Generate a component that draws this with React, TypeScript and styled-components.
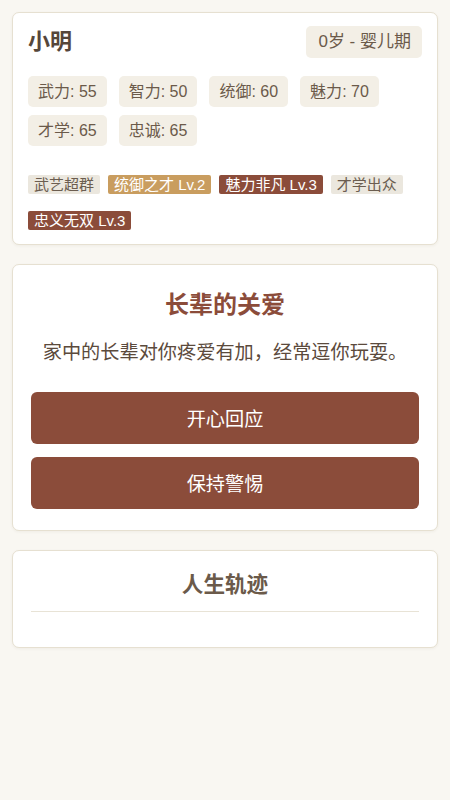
import React from "react";
import styled, { createGlobalStyle } from "styled-components";

const GlobalStyle = createGlobalStyle`
  html, body {
    margin: 0;
    padding: 0;
    background: #f9f7f2;
  }
  body {
    font-family: "Liberation Sans", "Noto Sans CJK SC", sans-serif;
    color: #5b4a3c;
  }
  * { box-sizing: border-box; }
`;

const Page = styled.div`
  padding: 12px 12px 40px;
  display: flex;
  flex-direction: column;
  gap: 19px;
`;

const Card = styled.section<{ $pad: string }>`
  background: #ffffff;
  border: 1px solid #e6e0d1;
  border-radius: 7px;
  box-shadow: 0 1px 3px rgba(90, 70, 40, 0.06);
  padding: ${(p) => p.$pad};
`;

const Header = styled.div`
  display: flex;
  align-items: center;
  justify-content: space-between;
  height: 32px;
  margin-bottom: 18px;
`;

const Name = styled.h2`
  margin: 0;
  font-size: 22px;
  font-weight: 700;
  color: #55463a;
  line-height: 1;
`;

const AgeBadge = styled.div`
  background: #f3efe6;
  color: #6b5a4a;
  font-size: 17px;
  line-height: 20px;
  padding: 6px 11px 6px 12px;
  border-radius: 5px;
`;

const Stats = styled.div`
  display: flex;
  flex-wrap: wrap;
  gap: 8px 12px;
`;

const Stat = styled.div`
  background: #f3efe6;
  color: #6b5a4a;
  font-size: 16px;
  line-height: 21px;
  padding: 5px 10px;
  border-radius: 5px;
`;

const Traits = styled.div`
  display: flex;
  flex-wrap: wrap;
  gap: 17px 8px;
  margin-top: 29px;
`;

const Trait = styled.span<{ $kind: "plain" | "gold" | "brown" }>`
  font-size: 15px;
  line-height: 19px;
  padding: 0 6px;
  border-radius: 2px;
  background: ${(p) =>
    p.$kind === "gold" ? "#c99d5f" : p.$kind === "brown" ? "#8b4c3a" : "#ebe7de"};
  color: ${(p) => (p.$kind === "plain" ? "#6b5d50" : "#ffffff")};
`;

const EventTitle = styled.h2`
  margin: 0 0 16px;
  text-align: center;
  font-size: 24px;
  line-height: 36px;
  font-weight: 700;
  color: #8b4c3a;
`;

const EventText = styled.p`
  margin: 0 0 25px;
  text-align: center;
  font-size: 19.2px;
  line-height: 28px;
  color: #5b4a3c;
`;

const Choices = styled.div`
  display: flex;
  flex-direction: column;
  gap: 13px;
`;

const ChoiceButton = styled.button`
  height: 52px;
  border: none;
  border-radius: 6px;
  background: #8b4c3a;
  color: #ffffff;
  font-family: inherit;
  font-size: 19.2px;
  cursor: pointer;
`;

const SectionTitle = styled.h3`
  margin: 0;
  padding-bottom: 11px;
  border-bottom: 1px solid #e8e3d6;
  text-align: center;
  font-size: 21.6px;
  line-height: 30px;
  font-weight: 700;
  color: #6b5a4a;
`;

const Timeline = styled.div`
  min-height: 20px;
`;

const stats = [
  ["武力", 55],
  ["智力", 50],
  ["统御", 60],
  ["魅力", 70],
  ["才学", 65],
  ["忠诚", 65],
] as const;

const traits: { label: string; kind: "plain" | "gold" | "brown" }[] = [
  { label: "武艺超群", kind: "plain" },
  { label: "统御之才 Lv.2", kind: "gold" },
  { label: "魅力非凡 Lv.3", kind: "brown" },
  { label: "才学出众", kind: "plain" },
  { label: "忠义无双 Lv.3", kind: "brown" },
];

export default function App() {
  return (
    <>
      <GlobalStyle />
      <Page>
        <Card $pad="13px 15px 14px">
          <Header>
            <Name>小明</Name>
            <AgeBadge>0岁 - 婴儿期</AgeBadge>
          </Header>
          <Stats>
            {stats.map(([k, v]) => (
              <Stat key={k}>
                {k}: {v}
              </Stat>
            ))}
          </Stats>
          <Traits>
            {traits.map((t) => (
              <Trait key={t.label} $kind={t.kind}>
                {t.label}
              </Trait>
            ))}
          </Traits>
        </Card>

        <Card $pad="22px 18px 21px">
          <EventTitle>长辈的关爱</EventTitle>
          <EventText>家中的长辈对你疼爱有加，经常逗你玩耍。</EventText>
          <Choices>
            <ChoiceButton>开心回应</ChoiceButton>
            <ChoiceButton>保持警惕</ChoiceButton>
          </Choices>
        </Card>

        <Card $pad="19px 18px 15px">
          <SectionTitle>人生轨迹</SectionTitle>
          <Timeline />
        </Card>
      </Page>
    </>
  );
}
